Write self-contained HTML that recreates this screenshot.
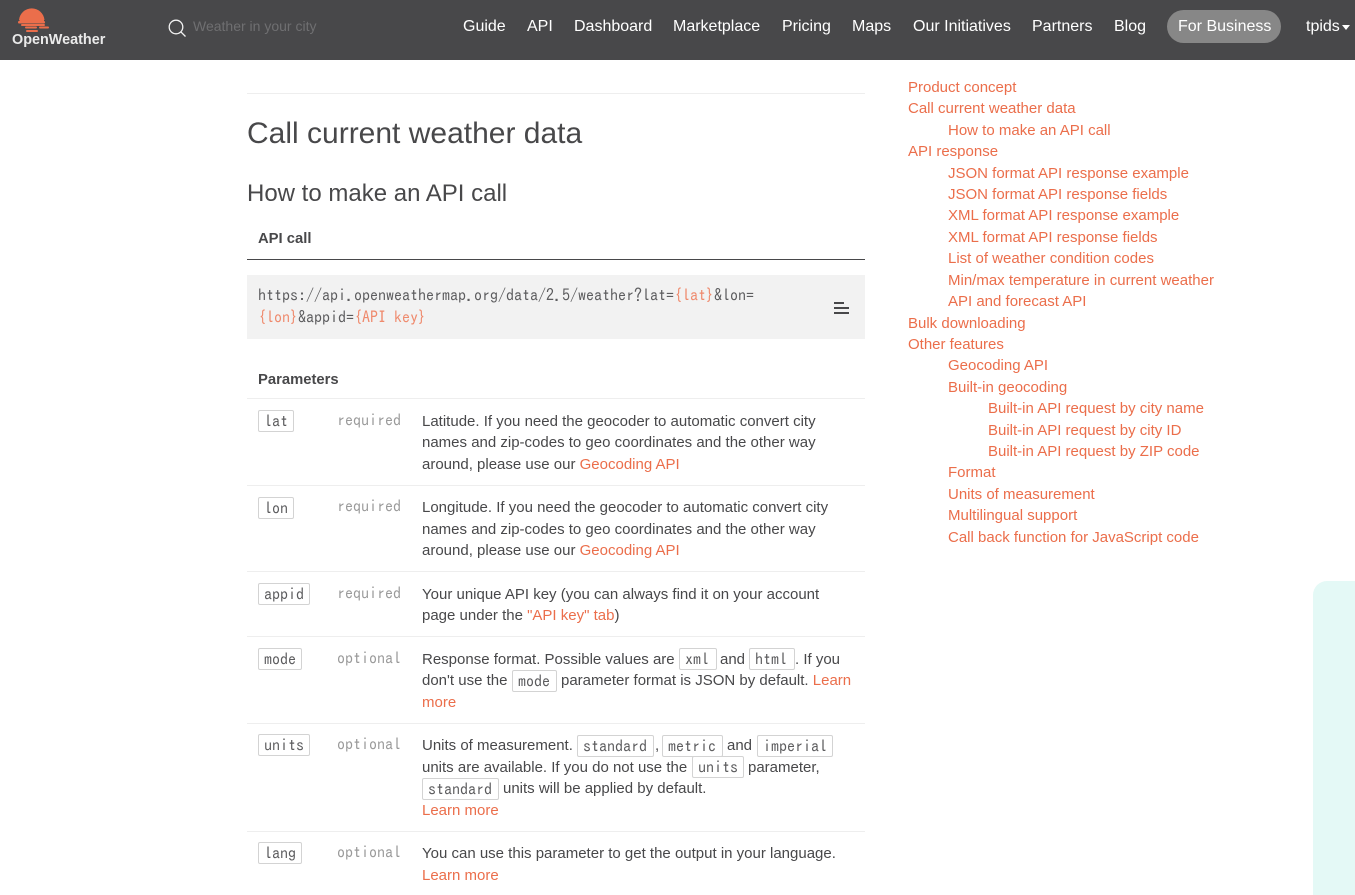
<!DOCTYPE html>
<html><head><meta charset="utf-8"><title>Call current weather data</title>
<style>
html,body{margin:0;padding:0;background:#fff;height:895px;overflow:hidden}
body{width:1355px;position:relative;font-family:"Liberation Sans",Arial,sans-serif;font-size:15px;line-height:21.43px;color:#48484a}
a{color:#eb6e4b;text-decoration:none}
.hdr{position:absolute;left:0;top:0;width:1355px;height:60px;background:#48484a}
.n{position:absolute;top:16px;color:#fff;font-size:16px;line-height:21px;white-space:nowrap}
.l{position:absolute;white-space:nowrap}
.hr{position:absolute;left:247px;width:618px;height:1px;background:#eee}
.m{font-family:"IPAGothic","Liberation Mono",monospace;font-size:16px;line-height:21px;color:#5c5c5e}
.k{display:inline-block;box-sizing:border-box;border:1px solid #d3d3d3;border-radius:2px;height:22px;padding:0 5px;line-height:20px;background:#fff;color:#5c5c5e;font-family:"IPAGothic","Liberation Mono",monospace;font-size:16px}
.o{color:#ef8a6d}
.m.g{color:#9a9a9a}
.s a{position:absolute;white-space:nowrap}
</style></head><body>
<div class="hdr">
<svg style="position:absolute;left:15px;top:5px" width="36" height="29" viewBox="15 5 36 29"><path d="M19 23A12.800 12.800 0 0 1 44.500 23Z" transform="translate(0 -3)" fill="#eb6e4b"/><rect x="19.500" y="19" width="24.500" height="3" fill="#eb6e4b"/><rect x="18" y="21" width="27" height="2.500" rx="1" fill="#eb6e4b"/><rect x="21" y="24" width="24" height="2" rx="1" fill="#eb6e4b"/><rect x="25" y="26.500" width="12" height="2" rx="1" fill="#eb6e4b"/><rect x="39" y="26.500" width="10" height="2" rx="1" fill="#eb6e4b"/><rect x="26" y="30" width="12" height="2" rx="1" fill="#eb6e4b"/></svg>
<div class="l" style="left:12px;top:31px;font-size:14.400px;line-height:18px;font-weight:bold;color:#eaeaea">OpenWeather</div>
<svg style="position:absolute;left:168px;top:19px" width="18" height="18" viewBox="0 0 18 18" fill="none" stroke="#f2f2f2" stroke-width="1.300"><circle cx="8" cy="8" r="6.800"/><path d="M12.800 12.800L17.500 17.500"/></svg>
<div class="l" style="left:193px;top:16px;font-size:14px;color:#6f6f71">Weather in your city</div>
<div class="n" style="left:463px">Guide</div>
<div class="n" style="left:527px">API</div>
<div class="n" style="left:574px">Dashboard</div>
<div class="n" style="left:673px">Marketplace</div>
<div class="n" style="left:782px">Pricing</div>
<div class="n" style="left:852px">Maps</div>
<div class="n" style="left:913px">Our Initiatives</div>
<div class="n" style="left:1032px">Partners</div>
<div class="n" style="left:1114px">Blog</div>
<div style="position:absolute;left:1167px;top:10px;width:114px;height:33px;border-radius:17px;background:#878787"></div>
<div class="n" style="left:1178px">For Business</div>
<div class="n" style="left:1306px">tpids</div>
<div style="position:absolute;left:1342px;top:25px;width:0;height:0;border-left:4.500px solid transparent;border-right:4.500px solid transparent;border-top:5px solid #fff"></div>
</div>

<div class="hr" style="top:93px"></div>
<div class="l" style="left:247px;top:114px;font-size:30px;line-height:40px">Call current weather data</div>
<div class="l" style="left:247px;top:179px;font-size:24px;line-height:30px">How to make an API call</div>
<div class="l" style="left:258px;top:229px;font-weight:bold;font-size:14.800px">API call</div>
<div class="hr" style="top:259px;background:#48484a"></div>
<div style="position:absolute;left:247px;top:275px;width:618px;height:64px;background:#f2f2f2"></div>
<div class="l m" style="left:258px;top:285px">https://api.openweathermap.org/data/2.5/weather?lat=<span class="o">{lat}</span>&amp;lon=</div>
<div class="l m" style="left:258px;top:307px"><span class="o">{lon}</span>&amp;appid=<span class="o">{API key}</span></div>
<svg style="position:absolute;left:834px;top:302px" width="15" height="12" viewBox="0 0 15 12" fill="#48484a"><rect x="0" y="0" width="10" height="2"/><rect x="0" y="5" width="15" height="2"/><rect x="0" y="10" width="15" height="2"/></svg>

<div class="l" style="left:258px;top:370px;font-weight:bold;font-size:14.800px">Parameters</div>
<div class="hr" style="top:398px"></div>

<div class="l k" style="left:258px;top:410px">lat</div>
<div class="l m g" style="left:337px;top:410px">required</div>
<div class="l" style="left:422px;top:411px">Latitude. If you need the geocoder to automatic convert city</div>
<div class="l" style="left:422px;top:432px">names and zip-codes to geo coordinates and the other way</div>
<div class="l" style="left:422px;top:454px">around, please use our <a>Geocoding API</a></div>
<div class="hr" style="top:485px"></div>

<div class="l k" style="left:258px;top:497px">lon</div>
<div class="l m g" style="left:337px;top:496px">required</div>
<div class="l" style="left:422px;top:497px">Longitude. If you need the geocoder to automatic convert city</div>
<div class="l" style="left:422px;top:519px">names and zip-codes to geo coordinates and the other way</div>
<div class="l" style="left:422px;top:540px">around, please use our <a>Geocoding API</a></div>
<div class="hr" style="top:571px"></div>

<div class="l k" style="left:258px;top:583px">appid</div>
<div class="l m g" style="left:337px;top:583px">required</div>
<div class="l" style="left:422px;top:584px">Your unique API key (you can always find it on your account</div>
<div class="l" style="left:422px;top:605px">page under the <a>"API key" tab</a>)</div>
<div class="hr" style="top:636px"></div>

<div class="l k" style="left:258px;top:648px">mode</div>
<div class="l m g" style="left:337px;top:648px">optional</div>
<div class="l" style="left:422px;top:649px">Response format. Possible values are</div>
<div class="l k" style="left:679px;top:648px;width:38px">xml</div>
<div class="l" style="left:720px;top:649px">and</div>
<div class="l k" style="left:749px;top:648px;width:46px">html</div>
<div class="l" style="left:795px;top:649px">. If you</div>
<div class="l" style="left:422px;top:670px">don't use the</div>
<div class="l k" style="left:512px;top:670px;width:45px">mode</div>
<div class="l" style="left:561px;top:670px">parameter format is JSON by default. <a>Learn</a></div>
<div class="l" style="left:422px;top:692px"><a>more</a></div>
<div class="hr" style="top:723px"></div>

<div class="l k" style="left:258px;top:734px">units</div>
<div class="l m g" style="left:337px;top:734px">optional</div>
<div class="l" style="left:422px;top:735px">Units of measurement.</div>
<div class="l k" style="left:577px;top:735px;width:77px">standard</div>
<div class="l" style="left:655px;top:735px">,</div>
<div class="l k" style="left:662px;top:735px;width:61px">metric</div>
<div class="l" style="left:727px;top:735px">and</div>
<div class="l k" style="left:757px;top:735px;width:76px">imperial</div>
<div class="l" style="left:422px;top:757px">units are available. If you do not use the</div>
<div class="l k" style="left:692px;top:756px;width:52px">units</div>
<div class="l" style="left:748px;top:757px">parameter,</div>
<div class="l k" style="left:422px;top:778px;width:77px">standard</div>
<div class="l" style="left:503px;top:778px">units will be applied by default.</div>
<div class="l" style="left:422px;top:800px"><a>Learn more</a></div>
<div class="hr" style="top:831px"></div>

<div class="l k" style="left:258px;top:842px">lang</div>
<div class="l m g" style="left:337px;top:842px">optional</div>
<div class="l" style="left:422px;top:843px">You can use this parameter to get the output in your language.</div>
<div class="l" style="left:422px;top:865px"><a>Learn more</a></div>

<div class="s">
<a style="left:908px;top:77px">Product concept</a>
<a style="left:908px;top:98px">Call current weather data</a>
<a style="left:948px;top:120px">How to make an API call</a>
<a style="left:908px;top:141px">API response</a>
<a style="left:948px;top:163px">JSON format API response example</a>
<a style="left:948px;top:184px">JSON format API response fields</a>
<a style="left:948px;top:205px">XML format API response example</a>
<a style="left:948px;top:227px">XML format API response fields</a>
<a style="left:948px;top:248px">List of weather condition codes</a>
<a style="left:948px;top:270px">Min/max temperature in current weather</a>
<a style="left:948px;top:291px">API and forecast API</a>
<a style="left:908px;top:313px">Bulk downloading</a>
<a style="left:908px;top:334px">Other features</a>
<a style="left:948px;top:355px">Geocoding API</a>
<a style="left:948px;top:377px">Built-in geocoding</a>
<a style="left:988px;top:398px">Built-in API request by city name</a>
<a style="left:988px;top:420px">Built-in API request by city ID</a>
<a style="left:988px;top:441px">Built-in API request by ZIP code</a>
<a style="left:948px;top:462px">Format</a>
<a style="left:948px;top:484px">Units of measurement</a>
<a style="left:948px;top:505px">Multilingual support</a>
<a style="left:948px;top:527px">Call back function for JavaScript code</a>
</div>
<div style="position:absolute;left:1313px;top:581px;width:42px;height:314px;border-radius:14px 0 0 0;background:#e4f9f6"></div>
</body></html>
